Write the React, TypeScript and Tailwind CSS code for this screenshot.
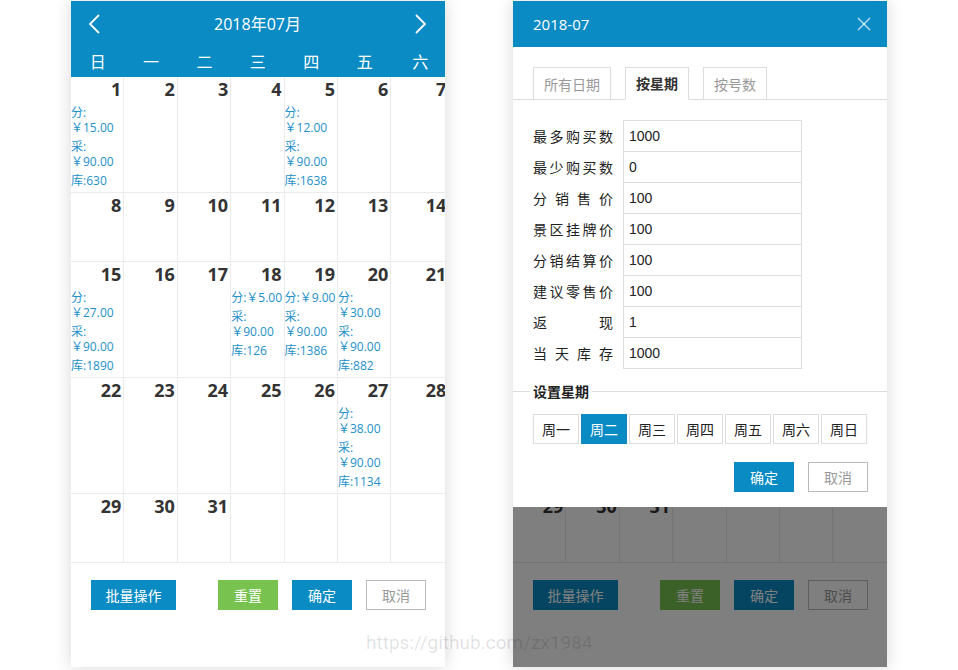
import React from 'react'

type Day = {
  n?: number
  fen?: string[]
  cai?: string[]
  ku?: string
}

const weekdays = ['日', '一', '二', '三', '四', '五', '六']

const prices: Record<number, Day> = {
  1: { fen: ['分:', '￥15.00'], cai: ['采:', '￥90.00'], ku: '库:630' },
  5: { fen: ['分:', '￥12.00'], cai: ['采:', '￥90.00'], ku: '库:1638' },
  15: { fen: ['分:', '￥27.00'], cai: ['采:', '￥90.00'], ku: '库:1890' },
  18: { fen: ['分:￥5.00'], cai: ['采:', '￥90.00'], ku: '库:126' },
  19: { fen: ['分:￥9.00'], cai: ['采:', '￥90.00'], ku: '库:1386' },
  20: { fen: ['分:', '￥30.00'], cai: ['采:', '￥90.00'], ku: '库:882' },
  27: { fen: ['分:', '￥38.00'], cai: ['采:', '￥90.00'], ku: '库:1134' },
}

const days: Day[] = Array.from({ length: 35 }, (_, i) =>
  i < 31 ? { n: i + 1, ...prices[i + 1] } : {}
)

const formRows = [
  { label: '最多购买数', value: '1000' },
  { label: '最少购买数', value: '0' },
  { label: '分销售价', value: '100' },
  { label: '景区挂牌价', value: '100' },
  { label: '分销结算价', value: '100' },
  { label: '建议零售价', value: '100' },
  { label: '返现', value: '1' },
  { label: '当天库存', value: '1000' },
]

const week = ['周一', '周二', '周三', '周四', '周五', '周六', '周日']

const cjk = "font-['Open_Sans','Noto_Sans_CJK_SC',sans-serif]"

const Chevron = ({ left }: { left?: boolean }) => (
  <svg width="12" height="20" viewBox="0 0 12 20" fill="none">
    <polyline
      points={left ? '11,1 2,10 11,19' : '1,1 10,10 1,19'}
      stroke="white"
      strokeWidth="1.8"
    />
  </svg>
)

const Block = ({ lines }: { lines: string[] }) => (
  <div className="mt-[4px] whitespace-nowrap text-[12px] leading-[15px] text-[#2390c9]">
    {lines.map((l) => (
      <div key={l}>{l}</div>
    ))}
  </div>
)

// covered = the copy that sits under the modal; hide the parts the modal hides
const Calendar = ({ covered }: { covered?: boolean }) => (
  <div className={`flex h-full flex-col ${cjk}`}>
    {/* header */}
    <div className={`bg-[#0a8bc4] text-white ${covered ? 'invisible' : ''}`}>
      <div className="flex h-[46px] items-center justify-between pl-[17px] pr-[18px]">
        <Chevron left />
        <span className="text-[16px]">2018年07月</span>
        <Chevron />
      </div>
      <div className="grid h-[30px] grid-cols-[repeat(6,53.4px)_58px] items-center text-[16px]">
        {weekdays.map((w) => (
          <span key={w} className="text-center">
            {w}
          </span>
        ))}
      </div>
    </div>

    {/* days */}
    <div className="grid w-[378px] grid-cols-[repeat(6,53.4px)_58px]">
      {days.map((d, i) => (
        <div
          key={i}
          className="min-h-[69px] overflow-hidden border-b border-r border-[#ebebeb] pb-[4px]"
        >
          <div className={covered && i < 28 ? 'invisible' : ''}>
            {d.n && (
              <div className="h-[24px] pr-[2px] text-right text-[18px] font-bold leading-[24px] text-[#333]">
                {d.n}
              </div>
            )}
            {d.fen && <Block lines={d.fen} />}
            {d.cai && <Block lines={d.cai} />}
            {d.ku && <Block lines={[d.ku]} />}
          </div>
        </div>
      ))}
    </div>

    {/* footer */}
    <div className="flex justify-between pl-[20px] pr-[19px] pt-[17px] text-[14px]">
      <button className="h-[30px] w-[85px] bg-[#0a8bc4] text-white">批量操作</button>
      <div className="flex gap-[14px]">
        <button className="h-[30px] w-[60px] bg-[#78c350] text-white">重置</button>
        <button className="h-[30px] w-[60px] bg-[#0a8bc4] text-white">确定</button>
        <button className="h-[30px] w-[60px] border border-[#bbb] text-[#999]">取消</button>
      </div>
    </div>
  </div>
)

const Modal = () => (
  <div className={`absolute inset-x-0 top-0 h-[506px] bg-white ${cjk}`}>
    <div className="flex h-[46px] items-center justify-between bg-[#0a8bc4] pl-[20px] pr-[16px] text-white">
      <span className="text-[15px]">2018-07</span>
      <svg width="14" height="14" viewBox="0 0 14 14" stroke="white" strokeOpacity="0.7" strokeWidth="1.5">
        <line x1="1" y1="1" x2="13" y2="13" />
        <line x1="13" y1="1" x2="1" y2="13" />
      </svg>
    </div>

    {/* tabs */}
    <div className="mt-[20px] flex h-[33px] gap-[14px] border-b border-[#ddd] px-[20px] text-[14px]">
      <div className="flex h-[33px] w-[78px] items-center justify-center border border-b-0 border-[#ddd] text-[#999]">
        所有日期
      </div>
      <div className="-mb-px flex h-[33px] w-[64px] items-center justify-center border border-[#ddd] border-b-white bg-white font-bold text-[#333]">
        按星期
      </div>
      <div className="flex h-[33px] w-[64px] items-center justify-center border border-b-0 border-[#ddd] text-[#999]">
        按号数
      </div>
    </div>

    {/* form */}
    <div className="mt-[20px] px-[20px]">
      {formRows.map((r, i) => (
        <div key={r.label} className={`flex items-center gap-[10px] ${i > 0 ? '-mt-px' : ''}`}>
          <div className="flex w-[80px] justify-between text-[14px] text-[#222]">
            {r.label.split('').map((c, j) => (
              <span key={j}>{c}</span>
            ))}
          </div>
          <div className="flex h-[32px] w-[179px] items-center border border-[#ddd] pl-[5px] font-['Liberation_Sans',sans-serif] text-[14px] text-[#222]">
            {r.value}
          </div>
        </div>
      ))}
    </div>

    {/* week set */}
    <div className="mt-[12px] flex h-[20px] items-center">
      <div className="h-px w-[17px] bg-[#ddd]" />
      <span className="px-[3px] text-[14px] font-bold text-[#222]">设置星期</span>
      <div className="h-px flex-1 bg-[#ddd]" />
    </div>
    <div className="mt-[13px] flex gap-[2px] px-[20px] text-[14px]">
      {week.map((w) => (
        <div
          key={w}
          className={`flex h-[30px] w-[46px] items-center justify-center border ${
            w === '周二' ? 'border-[#0a8bc4] bg-[#0a8bc4] text-white' : 'border-[#ddd] text-[#222]'
          }`}
        >
          {w}
        </div>
      ))}
    </div>

    <div className="mt-[18px] flex justify-end gap-[14px] pr-[19px] text-[14px]">
      <button className="h-[30px] w-[60px] bg-[#0a8bc4] text-white">确定</button>
      <button className="h-[30px] w-[60px] border border-[#bbb] text-[#999]">取消</button>
    </div>
  </div>
)

export default function App() {
  return (
    <div className="relative h-[670px] w-[958px] overflow-hidden bg-white">
      <div className="flex justify-center gap-[68px] pt-px">
        <div className="relative h-[666px] w-[374px] overflow-hidden bg-white shadow-[0_0_16px_rgba(0,0,0,0.16)]">
          <Calendar />
        </div>
        <div className="relative h-[666px] w-[374px] overflow-hidden bg-white shadow-[0_0_16px_rgba(0,0,0,0.16)]">
          <Calendar covered />
          <div className="absolute inset-0 bg-black/50" />
          <Modal />
        </div>
      </div>
      <div className="absolute left-[366px] top-[629px] font-['Roboto',sans-serif] text-[19px] text-black/[0.12]">
        https://github.com/zx1984
      </div>
    </div>
  )
}
